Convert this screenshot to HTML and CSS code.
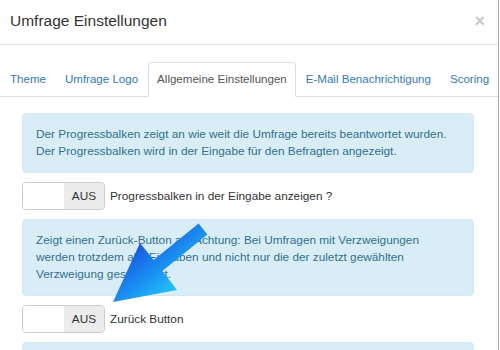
FILE: index.html
```html
<!DOCTYPE html>
<html lang="de">

<head>
  <meta charset="UTF-8">
  <meta name="viewport" content="width=device-width, initial-scale=1.0">
  <title>Umfrage Einstellungen</title>

  <link rel="stylesheet" href="styles.css">
</head>

<body>
  <div class="modal">
    <div class="modal-header">
      <h4 class="modal-title">Umfrage Einstellungen</h4>
      <span class="close">&times;</span>
    </div>

    <div class="modal-body">
      <ul class="nav-tabs">
        <li><a href="#">Theme</a></li>
        <li><a href="#">Umfrage Logo</a></li>
        <li class="active"><a href="#">Allgemeine Einstellungen</a></li>
        <li><a href="#">E-Mail Benachrichtigung</a></li>
        <li><a href="#">Scoring</a></li>
      </ul>

      <div class="tab-content">
        <div class="alert">
          Der Progressbalken zeigt an wie weit die Umfrage bereits beantwortet wurden.<br>
          Der Progressbalken wird in der Eingabe für den Befragten angezeigt.
        </div>
        <div class="toggle-row">
          <div class="toggle">
            <span class="toggle-handle"></span>
            <span class="toggle-off">AUS</span>
          </div>
          <label>Progressbalken in der Eingabe anzeigen ?</label>
        </div>

        <div class="alert">
          Zeigt einen Zurück-Button an. Achtung: Bei Umfragen mit Verzweigungen
          werden trotzdem alle Eingaben und nicht nur die der zuletzt gewählten
          Verzweigung gespeichert.
        </div>
        <div class="toggle-row">
          <div class="toggle">
            <span class="toggle-handle"></span>
            <span class="toggle-off">AUS</span>
          </div>
          <label>Zurück Button</label>
        </div>

        <div class="alert alert-empty"></div>
      </div>
    </div>
  </div>

  <!-- Hinweispfeil -->
  <svg class="pointer" width="500" height="350" viewBox="0 0 500 350">
    <defs>
      <linearGradient id="arrowFill" gradientUnits="userSpaceOnUse" x1="140" y1="243" x2="177" y2="290">
        <stop offset="0" stop-color="#1658e2"/>
        <stop offset="0.5" stop-color="#1a8cf0"/>
        <stop offset="1" stop-color="#22c6f8"/>
      </linearGradient>
    </defs>
    <polygon fill="url(#arrowFill)"
      points="198.6,223.6 207.4,234.4 162.4,271 177,290 113,302 140,243 153.6,260"/>
  </svg>
</body>

</html>
```

FILE: styles.css
```css
body {
  margin: 0;
  font-family: "Liberation Sans", Helvetica, Arial, sans-serif;
  font-size: 11.8px;
  line-height: 17px;
  color: #333;
  background: #fff;
  overflow: hidden;
}

.modal {
  width: 498px;
  height: 350px;
  border-right: 1px solid #a8a8a8;
  background: #fff;
  overflow: hidden;
}

.modal-header {
  display: flex;
  justify-content: space-between;
  align-items: flex-start;
  padding: 12px 13px 14px 10px;
  border-bottom: 1px solid #e5e5e5;
}
.modal-title {
  margin: 0;
  font-size: 15.5px;
  font-weight: normal;
  line-height: 17px;
  color: #333;
}
.close {
  font-size: 18px;
  font-weight: bold;
  line-height: 17px;
  color: #c8c8c8;
  margin-top: 1px;
}

.modal-body {
  padding-top: 17px;
}

.nav-tabs {
  display: flex;
  margin: 0;
  padding: 0 0 0 1px;
  list-style: none;
  white-space: nowrap;
  border-bottom: 1px solid #ddd;
  font-size: 11.55px;
}
.nav-tabs li {
  margin-right: 1px;
  margin-bottom: -1px;
}
.nav-tabs a {
  display: block;
  padding: 8px;
  border: 1px solid transparent;
  border-radius: 4px 4px 0 0;
  color: #337ab7;
  text-decoration: none;
}
.nav-tabs .active a {
  color: #555;
  background: #fff;
  border-color: #ddd #ddd transparent;
}

.tab-content {
  display: flex;
  flex-direction: column;
  gap: 9px;
  padding: 16px 24px 0 22px;
}

.alert {
  padding: 12px 13px;
  border: 1px solid #d3eaf4;
  border-radius: 4px;
  background: #d9edf7;
  color: #31708f;
}
.alert-empty {
  height: 40px;
}

.toggle-row {
  display: flex;
  align-items: center;
  gap: 5px;
}
.toggle {
  display: flex;
  width: 81px;
  height: 26px;
  border: 1px solid #ccc;
  border-radius: 4px;
  overflow: hidden;
}
.toggle-handle {
  width: 41px;
  background: #fff;
}
.toggle-off {
  flex: 1;
  display: flex;
  align-items: center;
  justify-content: center;
  background: #ececec;
  color: #333;
}

.pointer {
  position: absolute;
  left: 0;
  top: 0;
  pointer-events: none;
}
```
